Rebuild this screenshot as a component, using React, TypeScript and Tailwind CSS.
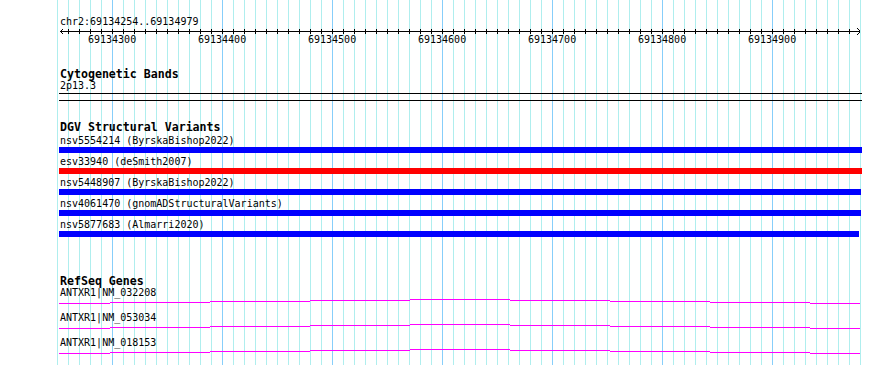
import React from "react";

// 11px per 10bp; grid line i sits at 57 + 11 * i (69134250 + 10 * i)
const gridLines = Array.from({ length: 74 }, (_, i) => ({
  x: 57 + i * 11,
  major: (i - 5) % 10 === 0,
}));

const rulerLabels = [
  "69134300",
  "69134400",
  "69134500",
  "69134600",
  "69134700",
  "69134800",
  "69134900",
];

const variants = [
  { name: "nsv5554214 (ByrskaBishop2022)", color: "bg-[#0000ff]", width: "w-[803px]" },
  { name: "esv33940 (deSmith2007)", color: "bg-[#ff0000]", width: "w-[803px]" },
  { name: "nsv5448907 (ByrskaBishop2022)", color: "bg-[#0000ff]", width: "w-[802px]" },
  { name: "nsv4061470 (gnomADStructuralVariants)", color: "bg-[#0000ff]", width: "w-[802px]" },
  { name: "nsv5877683 (Almarri2020)", color: "bg-[#0000ff]", width: "w-[800px]" },
];

const genes = ["ANTXR1|NM_032208", "ANTXR1|NM_053034", "ANTXR1|NM_018153"];

// intron hat: [x0, x1, yOffset] in page coords
const hat: [number, number, number][] = [
  [59, 110, 4],
  [110, 210, 3],
  [210, 310, 2],
  [310, 410, 1],
  [410, 510, 0],
  [510, 610, 1],
  [610, 710, 2],
  [710, 810, 3],
  [810, 860, 4],
];

const Ruler: React.FC = () => {
  const ticks = gridLines.filter((l) => l.x > 62 && l.x < 856);
  return (
    <svg width={801} height={8} className="block" shapeRendering="crispEdges">
      <rect x={0} y={4} width={800} height={1} fill="#000" />
      {ticks.map((t) => (
        <rect key={t.x} x={t.x - 60} y={2} width={1} height={5} fill="#000" />
      ))}
      {/* left arrow */}
      <rect x={1} y={3} width={1} height={1} fill="#000" />
      <rect x={2} y={2} width={1} height={1} fill="#000" />
      <rect x={1} y={5} width={1} height={1} fill="#000" />
      <rect x={2} y={6} width={1} height={1} fill="#000" />
      {/* right arrow */}
      <rect x={799} y={3} width={1} height={1} fill="#000" />
      <rect x={798} y={2} width={1} height={1} fill="#000" />
      <rect x={797} y={1} width={1} height={1} fill="#000" />
      <rect x={799} y={5} width={1} height={1} fill="#000" />
      <rect x={798} y={6} width={1} height={1} fill="#000" />
      <rect x={797} y={7} width={1} height={1} fill="#000" />
    </svg>
  );
};

const GeneLine: React.FC = () => (
  <svg width={801} height={5} className="block ml-[-1px]" shapeRendering="crispEdges">
    {hat.map(([x0, x1, y]) => (
      <rect key={x0} x={x0 - 59} y={y} width={x1 - x0} height={1} fill="#ff00ff" />
    ))}
  </svg>
);

const App: React.FC = () => {
  return (
    <div className="relative w-[890px] h-[365px] overflow-hidden bg-white text-black font-['DejaVu_Sans_Mono',monospace] text-[10px] leading-[10px]">
      <svg className="absolute inset-0" width={890} height={365} shapeRendering="crispEdges">
        {gridLines.map((l) => (
          <rect
            key={l.x}
            x={l.x}
            y={0}
            width={1}
            height={365}
            fill={l.major ? "#87cefa" : "#afeeee"}
          />
        ))}
      </svg>

      <div className="relative pl-[60px] pt-[17px]">
        {/* ruler */}
        <div className="h-[10px] whitespace-pre">chr2:69134254..69134979</div>
        <Ruler />
        <div className="relative h-[10px]">
          {rulerLabels.map((label, i) => (
            <span key={label} className="absolute top-0 w-[48px] text-center" style={{ left: 112 + i * 110 - 60 - 24 }}>
              {label}
            </span>
          ))}
        </div>

        {/* cytobands */}
        <div className="mt-[23px] h-[12px] font-bold text-[11.6px] leading-[12px]">Cytogenetic Bands</div>
        <div className="mt-[1px] h-[10px]">2p13.3</div>
        <div className="mt-[2px] ml-[-1px] w-[803px] h-[8px] border-y border-black"></div>

        {/* dgv */}
        <div className="mt-[20px] h-[12px] font-bold text-[11.6px] leading-[12px]">DGV Structural Variants</div>
        <div className="mt-[3px] flex flex-col gap-[4px]">
          {variants.map((v) => (
            <div key={v.name}>
              <div className="h-[10px] whitespace-pre">{v.name}</div>
              <div className={`mt-[1px] ml-[-1px] h-[6px] ${v.color} ${v.width}`}></div>
            </div>
          ))}
        </div>

        {/* refseq */}
        <div className="mt-[38px] h-[12px] font-bold text-[11.6px] leading-[12px]">RefSeq Genes</div>
        <div className="mt-[1px] flex flex-col gap-[9px]">
          {genes.map((g) => (
            <div key={g}>
              <div className="h-[10px]">{g}</div>
              <div className="mt-[1px]">
                <GeneLine />
              </div>
            </div>
          ))}
        </div>
      </div>
    </div>
  );
};

export default App;
